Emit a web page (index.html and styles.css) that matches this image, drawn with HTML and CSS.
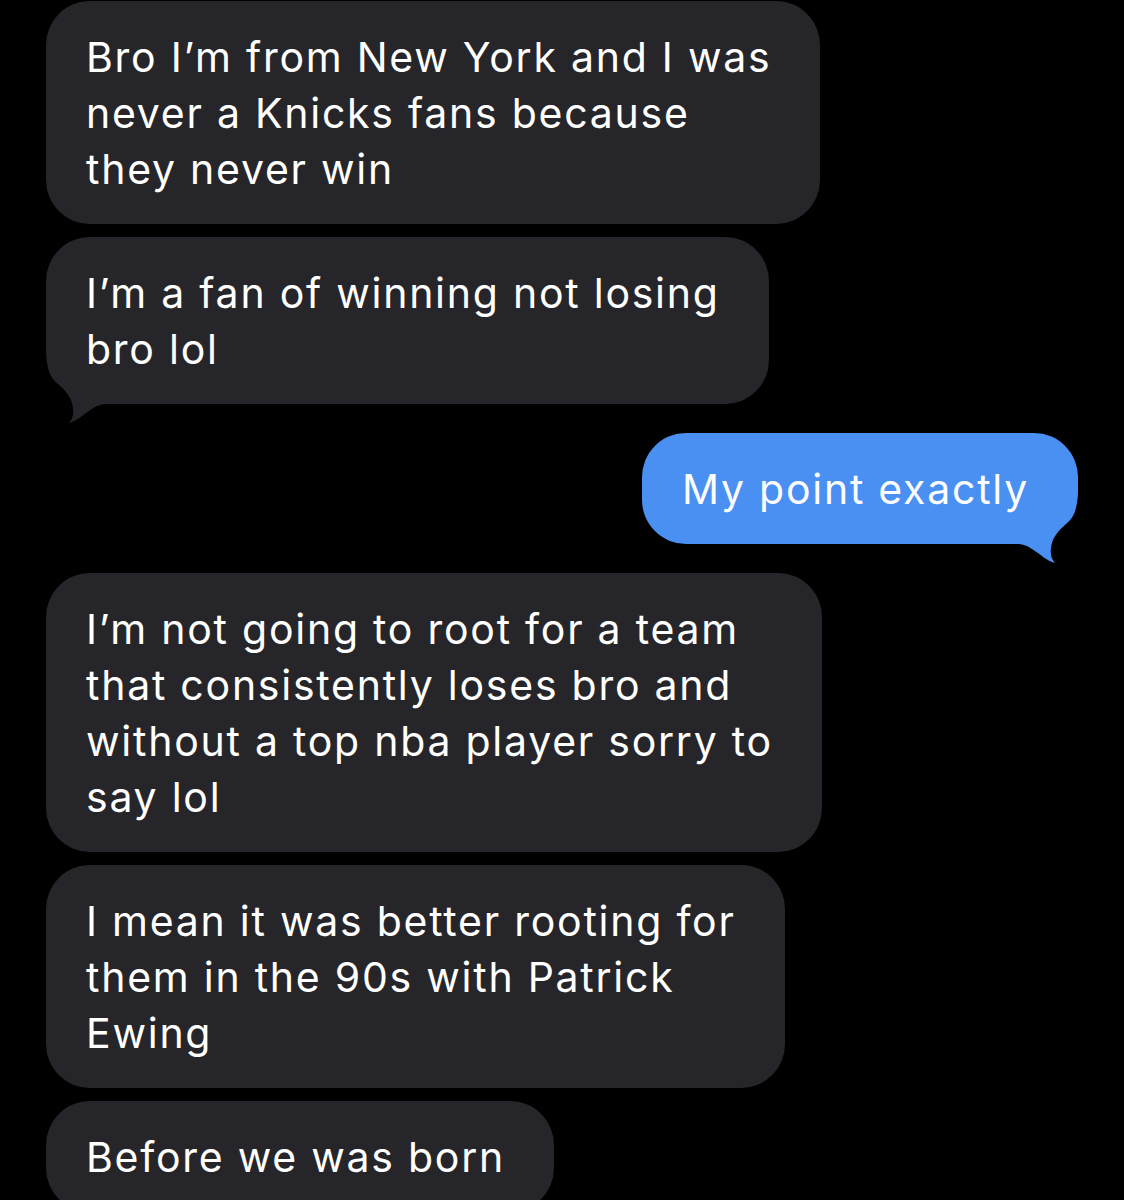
FILE: index.html
```html
<!DOCTYPE html>
<html lang="en">
<head>
<meta charset="utf-8">
<title>Messages</title>
<link rel="stylesheet" href="styles.css">
</head>
<body>
<div class="thread">
  <div class="bubble recv">Bro I’m from New York and I was<br>never a Knicks fans because<br>they never win</div>
  <div class="bubble recv tailed gap-s">I’m a fan of winning not losing<br>bro lol
    <svg class="tail tail-left" viewBox="0 -56 62 76" width="62" height="76"><path d="M0,-56 C0,-36 4,-26 12,-20 C20,-13 26,-6 27,4 C28,11 26,16 23,19 C31,17 38,10 46,5 C50,2 55,0 62,0 L62,-56 Z"/></svg>
  </div>
  <div class="bubble sent tailed gap-l">My point exactly
    <svg class="tail tail-right" viewBox="0 -56 62 76" width="62" height="76"><path d="M0,-56 C0,-36 4,-26 12,-20 C20,-13 26,-6 27,4 C28,11 26,16 23,19 C31,17 38,10 46,5 C50,2 55,0 62,0 L62,-56 Z"/></svg>
  </div>
  <div class="bubble recv gap-l">I’m not going to root for a team<br>that consistently loses bro and<br>without a top nba player sorry to<br>say lol</div>
  <div class="bubble recv gap-s">I mean it was better rooting for<br>them in the 90s with Patrick<br>Ewing</div>
  <div class="bubble recv gap-s">Before we was born</div>
</div>
</body>
</html>
```
FILE: styles.css
```css
html, body {
  margin: 0;
  padding: 0;
  background: #000;
}
body {
  width: 1124px;
  height: 1200px;
  overflow: hidden;
  font-family: "Inter", "Roboto", "Liberation Sans", sans-serif;
}
.thread {
  display: flex;
  flex-direction: column;
  padding: 1px 46px 0 46px;
}
.bubble {
  position: relative;
  isolation: isolate;
  box-sizing: border-box;
  padding: 27.5px 49px 27.5px 40px;
  border-radius: 44px;
  font-size: 41px;
  line-height: 56px;
  letter-spacing: 1.75px;
  color: #fff;
  white-space: nowrap;
  width: fit-content;
}
.recv {
  align-self: flex-start;
  background: #26262a;
}
.sent {
  align-self: flex-end;
  background: #4a8ff2;
  color: #fbfdff;
}
.recv.tailed {
  border-bottom-left-radius: 56px;
}
.sent.tailed {
  border-bottom-right-radius: 56px;
}
.gap-s { margin-top: 13px; }
.gap-l { margin-top: 29px; }
.tail {
  position: absolute;
  bottom: -20px;
  z-index: -1;
  display: block;
}
.tail-left {
  left: 0;
  fill: #26262a;
}
.tail-right {
  right: 0;
  transform: scaleX(-1);
  fill: #4a8ff2;
}
```
